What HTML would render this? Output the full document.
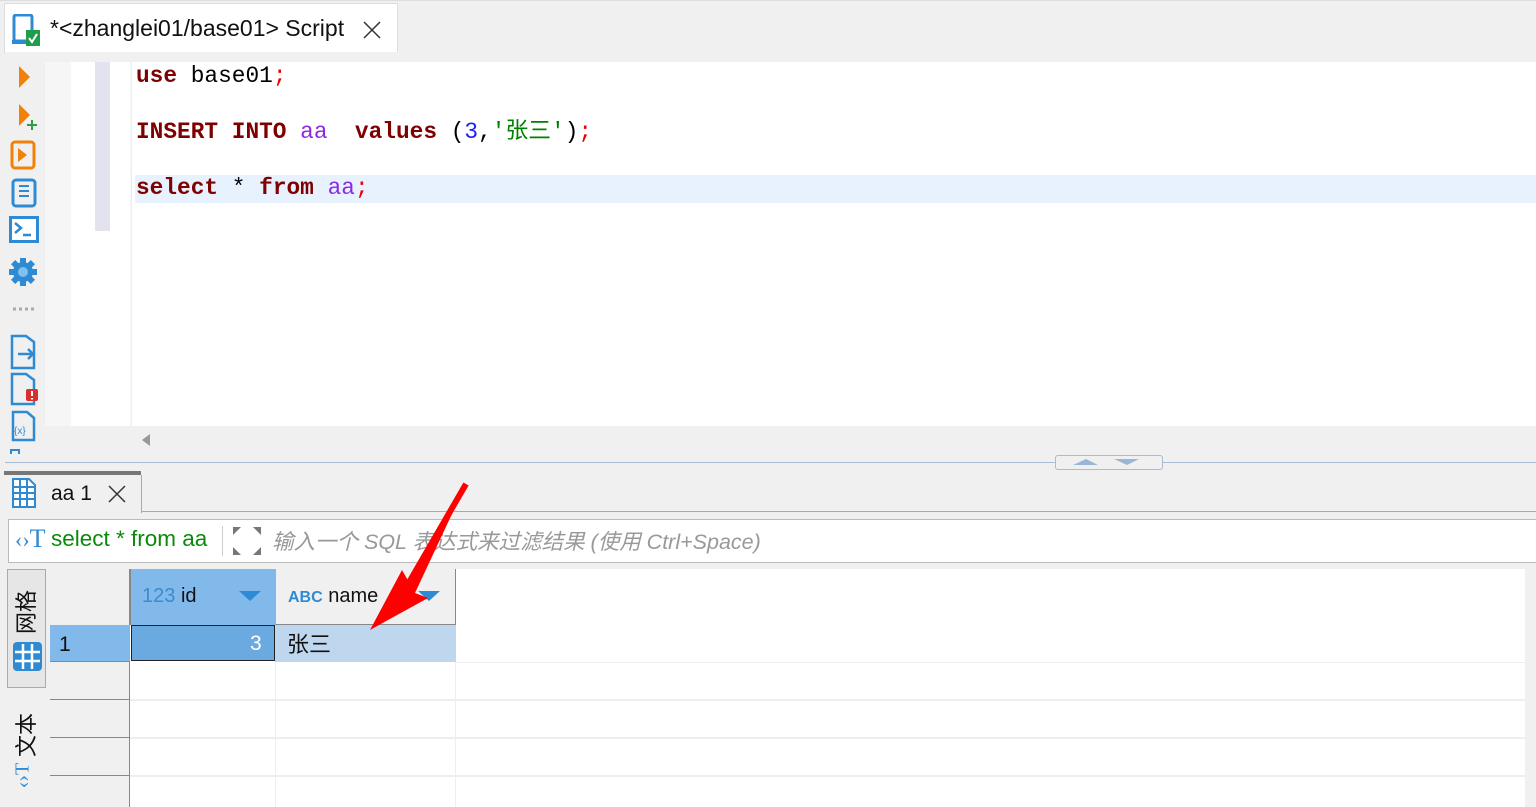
<!DOCTYPE html>
<html><head><meta charset="utf-8"><style>
*{margin:0;padding:0;box-sizing:border-box}
body{width:1536px;height:807px;overflow:hidden;background:#f0f0f0;font-family:"Liberation Sans","Noto Sans CJK SC",sans-serif;position:relative}
.a{position:absolute}
.code{font-family:"Liberation Mono","Noto Sans CJK SC",monospace;font-size:22.8px;white-space:pre;line-height:28px;left:136px}
.k{color:#7f0000;font-weight:bold}.t{color:#8a2be2}.r{color:#e00}.n{color:#1d1dff}.s{color:#008000}
.vt{font-size:22px;color:#111;transform:rotate(-90deg);transform-origin:center;white-space:nowrap}
</style></head><body>
<!-- top tab bar -->
<div class="a" style="left:0;top:0;width:1536px;height:52px;background:#f0f0f0;border-top:1px solid #ddd"></div>
<div class="a" style="left:4px;top:3px;width:394px;height:50px;background:#fff;border:1px solid #ddd;border-bottom:none"></div>
<svg class="a" style="left:12px;top:14px" width="32" height="34" viewBox="0 0 32 34"><rect x="2" y="1" width="18" height="26" rx="2" fill="none" stroke="#2f8ad4" stroke-width="3"/><rect x="0" y="26" width="14" height="4" fill="#2f8ad4"/><rect x="14" y="16" width="14" height="16" fill="#1e9e4a"/><path d="M17 24l3 4 5-8" stroke="#fff" stroke-width="2" fill="none"/></svg>
<div class="a" style="left:50px;top:15px;font-size:23px;color:#111">*&lt;zhanglei01/base01&gt; Script</div>
<svg class="a" style="left:362px;top:20px" width="20" height="20"><path d="M2 2L18 18M18 2L2 18" stroke="#333" stroke-width="1.5"/></svg>
<!-- editor -->
<div class="a" style="left:5px;top:52px;width:1531px;height:403px;background:#f0f0f0"></div>
<div class="a" style="left:45px;top:62px;width:86px;height:364px;background:#f6f6f6"></div>
<div class="a" style="left:71px;top:62px;width:59px;height:364px;background:#fff"></div>
<div class="a" style="left:95px;top:62px;width:15px;height:169px;background:#e3e3ef"></div>
<div class="a" style="left:131px;top:62px;width:1405px;height:364px;background:#fff;border-left:1px solid #eee"></div>
<div class="a" style="left:135px;top:175px;width:1401px;height:28px;background:#e8f2fe"></div>
<div class="a code" style="top:62px"><span class="k">use</span> base01<span class="r">;</span></div>
<div class="a code" style="top:118px"><span class="k">INSERT INTO</span> <span class="t">aa</span>  <span class="k">values</span> (<span class="n">3</span>,<span class="s">'张三'</span>)<span class="r">;</span></div>
<div class="a code" style="top:174px"><span class="k">select</span> * <span class="k">from</span> <span class="t">aa</span><span class="r">;</span></div>
<svg class="a" style="left:140px;top:433px" width="12" height="14"><path d="M10 1L2 7L10 13Z" fill="#999"/></svg>
<!-- left toolbar icons -->
<svg class="a" style="left:8px;top:62px" width="34" height="392" viewBox="0 0 34 392">
<path d="M11 4L22 15L11 26Z" fill="#f0820a"/>
<path d="M11 42L22 53L11 64Z" fill="#f0820a"/><path d="M24 58v10M19 63h10" stroke="#2e9e3e" stroke-width="2"/>
<rect x="4" y="80" width="22" height="26" rx="3" fill="none" stroke="#f0820a" stroke-width="3"/><path d="M10 86L19 93L10 100Z" fill="#f0820a"/>
<rect x="5" y="118" width="22" height="26" rx="3" fill="none" stroke="#2f8ad4" stroke-width="3"/><path d="M11 124h10M11 129h10M11 134h10" stroke="#2f8ad4" stroke-width="2"/>
<rect x="1" y="154" width="30" height="27" fill="#2f8ad4"/><rect x="4" y="157" width="24" height="21" fill="#fff"/><path d="M7 161l6 5-6 5M15 173h8" stroke="#2f8ad4" stroke-width="2.5" fill="none"/>
<g fill="#2f8ad4"><circle cx="15" cy="210" r="10"/><rect x="12" y="196" width="6" height="28"/><rect x="1" y="207" width="28" height="6"/><rect x="12" y="196" width="6" height="28" transform="rotate(45 15 210)"/><rect x="12" y="196" width="6" height="28" transform="rotate(-45 15 210)"/></g><circle cx="15" cy="210" r="5" fill="#7fc0ee"/>
<path d="M5 247h3M11 247h3M17 247h3M23 247h3" stroke="#aaa" stroke-width="3"/>
<path d="M4 274h14l8 6v26H4Z" fill="none" stroke="#2f8ad4" stroke-width="2.5"/><path d="M10 292h14M20 287l5 5-5 5" stroke="#2f8ad4" stroke-width="2.5" fill="none"/>
<path d="M4 312h14l8 6v24H4Z" fill="none" stroke="#2f8ad4" stroke-width="2.5"/><rect x="18" y="327" width="12" height="12" rx="2" fill="#d8302a"/><path d="M24 329v5M24 336v1.5" stroke="#fff" stroke-width="2"/>
<path d="M5 350h14l7 6v22H5Z" fill="none" stroke="#2f8ad4" stroke-width="2.5"/><text x="6" y="372" font-size="10" fill="#2f8ad4" font-family="Liberation Sans">{x}</text>
<rect x="3" y="388" width="8" height="6" fill="none" stroke="#2f8ad4" stroke-width="2"/>
</svg>
<!-- splitter -->
<div class="a" style="left:5px;top:462px;width:1531px;height:1px;background:#a9bcd3"></div>
<div class="a" style="left:1055px;top:455px;width:108px;height:15px;border:1px solid #a9bcd3;border-radius:3px;background:#f0f0f0"></div>
<svg class="a" style="left:1070px;top:457px" width="80" height="10"><path d="M3 8L16 2L28 8Z" fill="#9ab6d6"/><path d="M44 2h25L57 8Z" fill="#9ab6d6"/></svg>
<!-- results tab -->
<div class="a" style="left:4px;top:471px;width:137px;height:4px;background:#777"></div>
<div class="a" style="left:4px;top:475px;width:138px;height:38px;background:#f0f0f0;border-right:1px solid #aaa"></div>
<div class="a" style="left:141px;top:511px;width:1395px;height:1px;background:#aaa"></div>
<svg class="a" style="left:12px;top:478px" width="24" height="30"><path d="M1 1h16l6 6v22H1Z" fill="#fff" stroke="#2f8ad4" stroke-width="2"/><path d="M1 9h22M1 15h22M1 21h22M8 1v28M15 1v28" stroke="#2f8ad4" stroke-width="2"/></svg>
<div class="a" style="left:51px;top:482px;font-size:21px;color:#111">aa 1</div>
<svg class="a" style="left:107px;top:484px" width="20" height="20"><path d="M2 2L18 18M18 2L2 18" stroke="#333" stroke-width="1.5"/></svg>
<!-- filter bar -->
<div class="a" style="left:8px;top:519px;width:1528px;height:44px;background:#fff;border:1px solid #bbb;border-right:none"></div>
<div class="a" style="left:15px;top:524px;font-size:22px;color:#2f8ad4;font-family:'Liberation Serif',serif">‹›<span style="font-size:26px">T</span></div>
<div class="a" style="left:51px;top:526px;font-size:22.5px;color:#0a8a0a">select * from aa</div>
<div class="a" style="left:222px;top:526px;width:1px;height:30px;background:#ccc"></div>
<svg class="a" style="left:232px;top:526px" width="30" height="30"><path d="M1 1h8L1 9ZM29 1h-8l8 8ZM1 29h8L1 21ZM29 29h-8l8-8Z" fill="#777"/></svg>
<div class="a" style="left:272px;top:525px;font-size:21.5px;color:#999;font-style:italic">输入一个 SQL 表达式来过滤结果 (使用 Ctrl+Space)</div>
<!-- vertical tabs -->
<div class="a" style="left:7px;top:569px;width:39px;height:119px;background:#e6e6e6;border:1px solid #aaa"></div>
<div class="a vt" style="left:4px;top:597px;width:46px;height:30px;line-height:30px;text-align:center">网格</div>
<svg class="a" style="left:12px;top:641px" width="31" height="31"><rect x="1" y="1" width="29" height="29" rx="4" fill="#2f8ad4"/><path d="M3 11h25M3 20h25M11 3v25M20 3v25" stroke="#fff" stroke-width="2.5"/></svg>
<div class="a vt" style="left:4px;top:720px;width:46px;height:30px;line-height:30px;text-align:center">文本</div>
<div class="a" style="left:10px;top:764px;font-size:20px;color:#2f8ad4;font-family:'Liberation Serif',serif;transform:rotate(-90deg)">‹›T</div>
<!-- grid -->
<div class="a" style="left:130px;top:569px;width:1395px;height:238px;background:#fff"></div>
<div class="a" style="left:50px;top:569px;width:80px;height:238px;background:#f0f0f0;border-right:1px solid #888"></div>
<div class="a" style="left:130px;top:569px;width:145px;height:56px;background:#80b9ea;border-left:1px solid #888"></div>
<div class="a" style="left:275px;top:569px;width:181px;height:56px;background:#f0f0f0;border-left:1px solid #aac;border-right:1px solid #888;border-bottom:1px solid #888"></div>
<div class="a" style="left:142px;top:585px;font-size:20px;color:#3b8bd0">123 <span style="color:#111">id</span></div>
<svg class="a" style="left:238px;top:590px" width="24" height="12"><path d="M1 1h22L12 11Z" fill="#2f8ad4"/></svg>
<div class="a" style="left:288px;top:585px;font-size:20px;color:#111"><b style="color:#2f8ad4;font-size:16px">ABC</b> name</div>
<svg class="a" style="left:417px;top:590px" width="24" height="12"><path d="M1 1h22L12 11Z" fill="#2f8ad4"/></svg>
<div class="a" style="left:50px;top:625px;width:80px;height:37px;background:#80b9ea;border-bottom:1px solid #888"></div>
<div class="a" style="left:59px;top:633px;font-size:21px;color:#111">1</div>
<div class="a" style="left:131px;top:625px;width:144px;height:36px;background:#6aaae0;border:1px solid #222"></div>
<div class="a" style="left:250px;top:632px;font-size:21px;color:#fff">3</div>
<div class="a" style="left:275px;top:625px;width:181px;height:37px;background:#bfd7ee"></div>
<div class="a" style="left:287px;top:627px;font-size:22px;color:#111">张三</div>
<div class="a" style="left:50px;top:699px;width:80px;height:1px;background:#888"></div>
<div class="a" style="left:50px;top:737px;width:80px;height:1px;background:#888"></div>
<div class="a" style="left:50px;top:775px;width:80px;height:1px;background:#888"></div>
<div class="a" style="left:130px;top:699px;width:1395px;height:2px;background:#eee"></div>
<div class="a" style="left:130px;top:737px;width:1395px;height:2px;background:#eee"></div>
<div class="a" style="left:130px;top:775px;width:1395px;height:2px;background:#eee"></div>
<div class="a" style="left:456px;top:662px;width:1069px;height:1px;background:#eee"></div>
<div class="a" style="left:275px;top:662px;width:1px;height:145px;background:#eee"></div>
<div class="a" style="left:455px;top:662px;width:1px;height:145px;background:#eee"></div>
<div class="a" style="left:1525px;top:569px;width:11px;height:238px;background:#f0f0f0"></div>
<!-- red arrow -->
<svg class="a" style="left:360px;top:480px" width="110" height="160"><path d="M106 4L50 104L42 90L10 150L68 118L55 113Z" fill="#f00"/><path d="M106 4L40 118" stroke="#f00" stroke-width="6"/></svg>
</body></html>
